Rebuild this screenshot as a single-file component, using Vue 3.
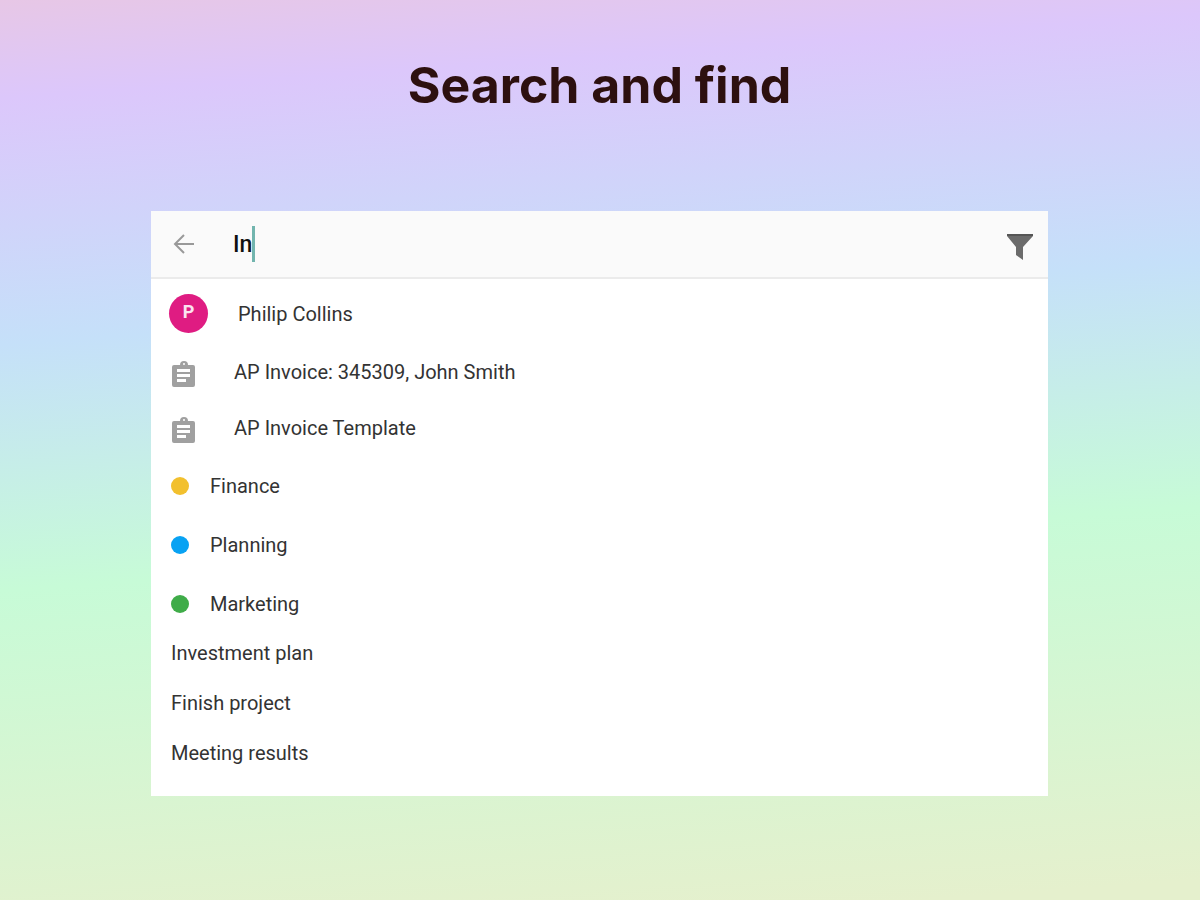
<script setup>
import { ref } from 'vue'

const query = ref('In')
const people = [{ initial: 'P', name: 'Philip Collins' }]
const documents = ['AP Invoice: 345309, John Smith', 'AP Invoice Template']
const tags = [
  { name: 'Finance', tone: 'amber' },
  { name: 'Planning', tone: 'blue' },
  { name: 'Marketing', tone: 'green' },
]
const tasks = ['Investment plan', 'Finish project', 'Meeting results']
</script>

<template>
  <main class="page">
    <h1 class="title">Search and find</h1>
    <section class="panel" aria-label="Search">
      <header class="bar">
        <button class="icon-button back" type="button" aria-label="Back">
          <svg width="24" height="24" viewBox="0 0 24 24" fill="none" stroke="#999" stroke-width="2">
            <path d="M23 12H4M13 3L4 12L13 21" />
          </svg>
        </button>
        <label class="field">
          <input v-model="query" class="query" type="text" aria-label="Search query" />
          <span class="caret"></span>
        </label>
        <button class="icon-button filter" type="button" aria-label="Filter">
          <svg width="28" height="28" viewBox="0 0 28 28" fill="#6b6b6b">
            <path d="M1 1H27V3L17 14V27L10 22V14L1 3Z" />
            <path d="M1 1H27V3H1Z" fill="#555" />
          </svg>
        </button>
      </header>
      <ul class="results">
        <li v-for="p in people" :key="p.name" class="row person">
          <span class="avatar">{{ p.initial }}</span>
          <span>{{ p.name }}</span>
        </li>
        <li v-for="d in documents" :key="d" class="row document">
          <svg class="clipboard" width="26" height="28" viewBox="0 0 26 28">
            <path
              fill="#a0a0a0"
              fill-rule="evenodd"
              d="M3 4H9A4 4 0 0 1 17 4H22Q24 4 24 6V24Q24 26 22 26H3Q1 26 1 24V6Q1 4 3 4ZM13 2A1 1 0 0 0 13 4A1 1 0 0 0 13 2ZM6 8V11H19V8ZM6 13V16H19V13ZM6 18V21H15V18Z"
            />
          </svg>
          <span>{{ d }}</span>
        </li>
        <li v-for="t in tags" :key="t.name" class="row tag">
          <span class="dot" :class="t.tone"></span>
          <span>{{ t.name }}</span>
        </li>
        <li v-for="t in tasks" :key="t" class="row task">{{ t }}</li>
      </ul>
    </section>
  </main>
</template>

<style>
body {
  margin: 0;
}
</style>

<style scoped>
.page {
  box-sizing: border-box;
  min-height: 100vh;
  padding: 53px 152px 103px 151px;
  background: linear-gradient(176deg, #e7c7e6 0%, #dcc7fb 10%, #c5e0f9 35%, #c7fbd7 60%, #e5f0cd 98%);
  font-family: Roboto, "Liberation Sans", sans-serif;
  color: #333;
}
.title {
  margin: 0 0 94px;
  font-family: Inter, "Liberation Sans", sans-serif;
  font-size: 50px;
  line-height: 64px;
  font-weight: 700;
  text-align: center;
  color: #2d100f;
}
.panel {
  background: #fff;
}
.bar {
  display: flex;
  align-items: center;
  height: 66px;
  padding: 0 14px 0 20px;
  background: #fafafa;
  border-bottom: 2px solid #ebebeb;
}
.icon-button {
  display: flex;
  padding: 0;
  border: 0;
  background: none;
}
.field {
  display: flex;
  align-items: center;
  flex: 1;
  margin-left: 38px;
}
.query {
  field-sizing: content;
  padding: 2px 0 0;
  border: 0;
  outline: 0;
  background: none;
  font: 500 23px/36px Roboto, "Liberation Sans", sans-serif;
  color: #111;
  caret-color: transparent;
}
.caret {
  width: 3px;
  height: 36px;
  background: #72b5ae;
}
.filter {
  padding-top: 6px;
}
.results {
  margin: 0;
  padding: 4px 18px 23px;
  list-style: none;
  font-size: 20px;
  line-height: 24px;
}
.row {
  display: flex;
  align-items: center;
}
.person {
  height: 61px;
  gap: 30px;
}
.avatar {
  width: 39px;
  height: 39px;
  border-radius: 50%;
  background: #df1c82;
  color: #fbe3ef;
  font-size: 18px;
  line-height: 36px;
  font-weight: 700;
  text-align: center;
}
.document {
  height: 56px;
  padding-left: 2px;
  gap: 37px;
}
.clipboard {
  margin-top: 6px;
}
.tag {
  height: 59px;
  padding-left: 2px;
  gap: 21px;
}
.dot {
  width: 18px;
  height: 18px;
  border-radius: 50%;
}
.amber {
  background: #f2c02e;
}
.blue {
  background: #08a2f3;
}
.green {
  background: #3fac49;
}
.task {
  height: 40px;
  padding-left: 2px;
}
.task + .task {
  margin-top: 10px;
}
</style>
